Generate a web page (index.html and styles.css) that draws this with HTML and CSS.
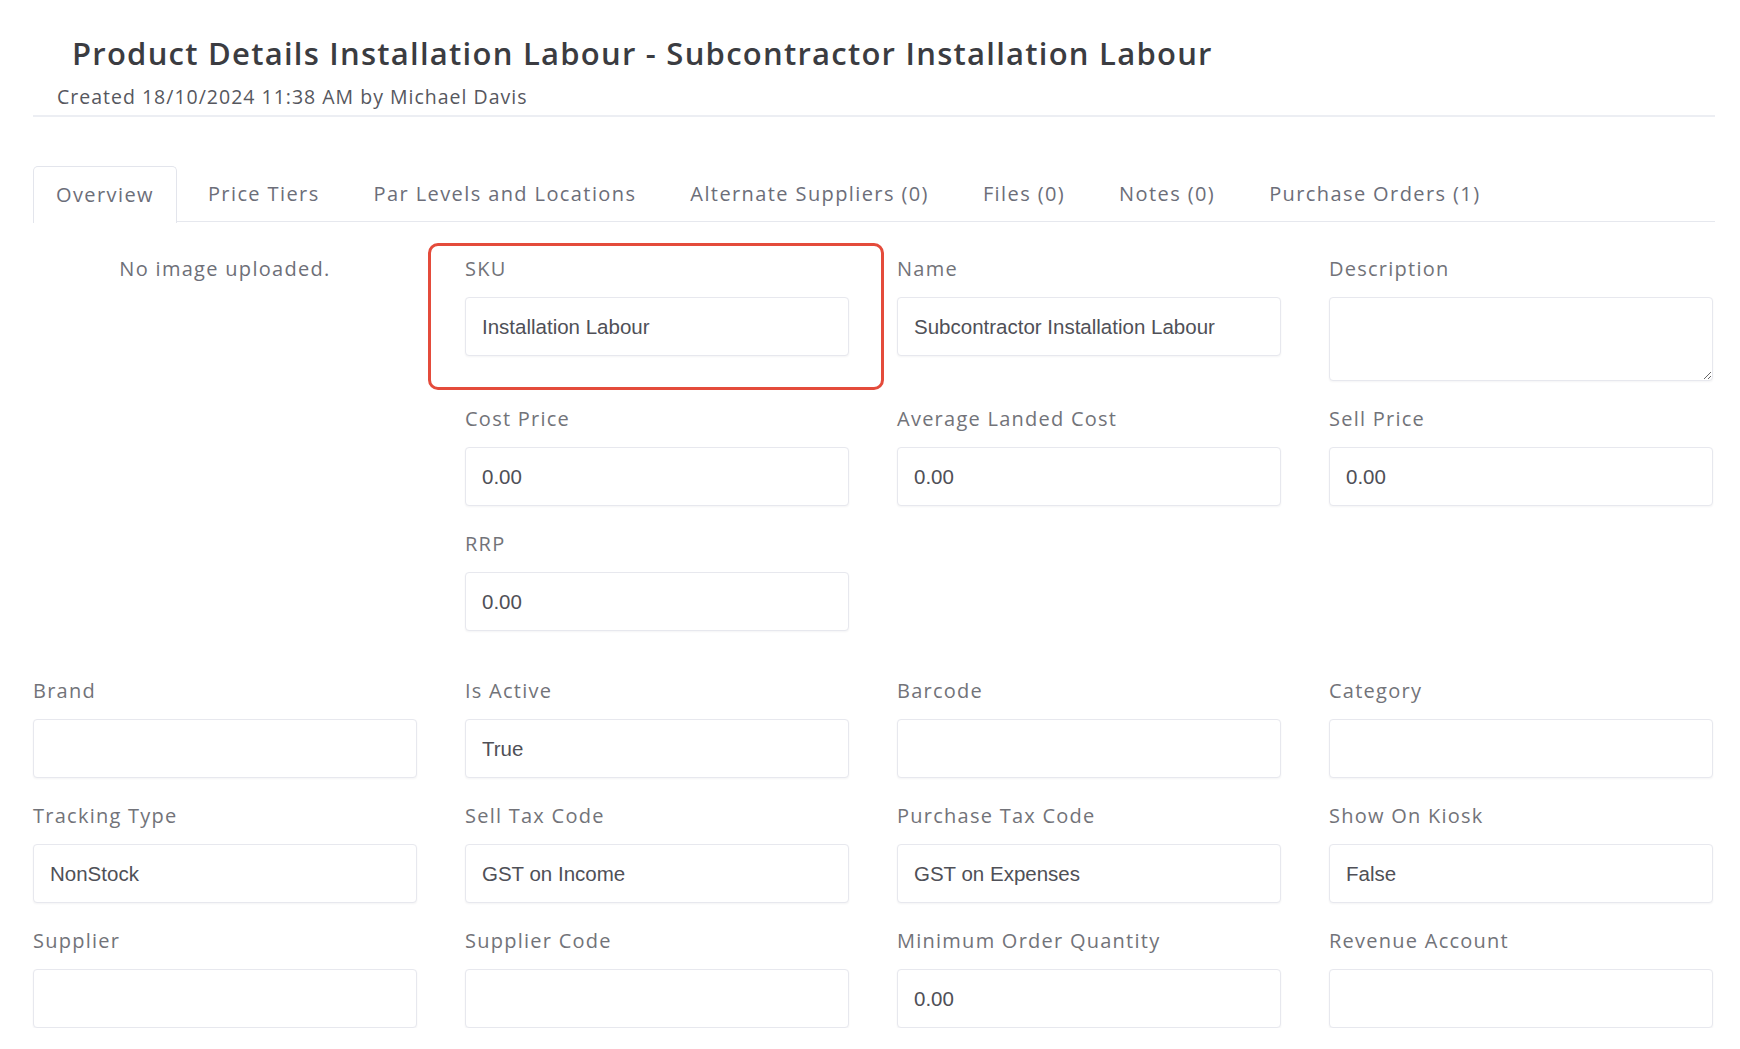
FILE: index.html
```html
<!DOCTYPE html>
<html lang="en">
<head>
<meta charset="utf-8">
<title>Product Details</title>
<link rel="stylesheet" href="styles.css">
</head>
<body>
<div class="page">
  <header class="page-header">
    <h1 class="page-title">Product Details Installation Labour - Subcontractor Installation Labour</h1>
    <div class="page-subtitle">Created 18/10/2024 11:38 AM by Michael Davis</div>
  </header>

  <nav class="tabs">
    <a class="tab active">Overview</a>
    <a class="tab">Price Tiers</a>
    <a class="tab">Par Levels and Locations</a>
    <a class="tab">Alternate Suppliers (0)</a>
    <a class="tab">Files (0)</a>
    <a class="tab">Notes (0)</a>
    <a class="tab">Purchase Orders (1)</a>
  </nav>

  <section class="overview">
    <div class="top-grid">
      <div class="image-col">No image uploaded.</div>
      <div class="top-fields">
        <div class="field highlighted">
          <span class="highlight-box"></span>
          <label class="field-label">SKU</label>
          <input class="field-input" type="text" value="Installation Labour" readonly>
        </div>
        <div class="field">
          <label class="field-label">Name</label>
          <input class="field-input" type="text" value="Subcontractor Installation Labour" readonly>
        </div>
        <div class="field">
          <label class="field-label">Description</label>
          <textarea class="field-input field-textarea" readonly></textarea>
        </div>
        <div class="field">
          <label class="field-label">Cost Price</label>
          <input class="field-input" type="text" value="0.00" readonly>
        </div>
        <div class="field">
          <label class="field-label">Average Landed Cost</label>
          <input class="field-input" type="text" value="0.00" readonly>
        </div>
        <div class="field">
          <label class="field-label">Sell Price</label>
          <input class="field-input" type="text" value="0.00" readonly>
        </div>
        <div class="field">
          <label class="field-label">RRP</label>
          <input class="field-input" type="text" value="0.00" readonly>
        </div>
      </div>
    </div>

    <div class="bottom-grid">
      <div class="field">
        <label class="field-label">Brand</label>
        <input class="field-input" type="text" value="" readonly>
      </div>
      <div class="field">
        <label class="field-label">Is Active</label>
        <input class="field-input" type="text" value="True" readonly>
      </div>
      <div class="field">
        <label class="field-label">Barcode</label>
        <input class="field-input" type="text" value="" readonly>
      </div>
      <div class="field">
        <label class="field-label">Category</label>
        <input class="field-input" type="text" value="" readonly>
      </div>
      <div class="field">
        <label class="field-label">Tracking Type</label>
        <input class="field-input" type="text" value="NonStock" readonly>
      </div>
      <div class="field">
        <label class="field-label">Sell Tax Code</label>
        <input class="field-input" type="text" value="GST on Income" readonly>
      </div>
      <div class="field">
        <label class="field-label">Purchase Tax Code</label>
        <input class="field-input" type="text" value="GST on Expenses" readonly>
      </div>
      <div class="field">
        <label class="field-label">Show On Kiosk</label>
        <input class="field-input" type="text" value="False" readonly>
      </div>
      <div class="field">
        <label class="field-label">Supplier</label>
        <input class="field-input" type="text" value="" readonly>
      </div>
      <div class="field">
        <label class="field-label">Supplier Code</label>
        <input class="field-input" type="text" value="" readonly>
      </div>
      <div class="field">
        <label class="field-label">Minimum Order Quantity</label>
        <input class="field-input" type="text" value="0.00" readonly>
      </div>
      <div class="field">
        <label class="field-label">Revenue Account</label>
        <input class="field-input" type="text" value="" readonly>
      </div>
    </div>
  </section>
</div>
</body>
</html>
```

FILE: styles.css
```css
* {
  box-sizing: border-box;
}

html, body {
  margin: 0;
  padding: 0;
  background: #ffffff;
}

body {
  font-family: "Open Sans", "Noto Sans", sans-serif;
  color: #6e6f78;
  overflow: hidden;
}

.page {
  width: 1715px;
  padding-left: 33px;
}

.page-header {
  height: 117px;
  border-bottom: 2px solid #eceef3;
  padding-top: 33px;
}

.page-title {
  margin: 0 0 0 39px;
  font-size: 31px;
  font-weight: 600;
  line-height: 40px;
  color: #3b3c41;
  letter-spacing: 1.25px;
  white-space: nowrap;
}

.page-subtitle {
  margin: 11px 0 0 24px;
  font-size: 19.5px;
  line-height: 26px;
  color: #56575e;
  font-weight: 400;
  letter-spacing: 1px;
}

.tabs {
  display: flex;
  gap: 8px;
  margin-top: 49px;
  height: 56px;
  border-bottom: 1px solid #e6e8ee;
}

.tab {
  display: flex;
  align-items: center;
  padding: 0 22px 2px;
  font-size: 20px;
  letter-spacing: 1.4px;
  color: #6c6e79;
  border: 1px solid transparent;
  border-bottom: none;
  border-radius: 5px 5px 0 0;
  cursor: pointer;
  white-space: nowrap;
}

.tab.active {
  border-color: #e3e5ec;
  background: #ffffff;
  height: 57px;
}

.overview {
  padding-top: 35px;
}

.top-grid {
  display: grid;
  grid-template-columns: 384px 1fr;
  column-gap: 48px;
}

.image-col {
  text-align: center;
  font-size: 20px;
  letter-spacing: 1.3px;
  line-height: 24px;
  color: #6e6f78;
}

.top-fields {
  display: grid;
  grid-template-columns: repeat(3, 384px);
  column-gap: 48px;
  row-gap: 26px;
  align-items: start;
}

.bottom-grid {
  margin-top: 48px;
  display: grid;
  grid-template-columns: repeat(4, 384px);
  column-gap: 48px;
  row-gap: 26px;
}

.field {
  display: flex;
  flex-direction: column;
}

.field.highlighted {
  position: relative;
}

.highlight-box {
  position: absolute;
  left: -37px;
  top: -14px;
  width: 456px;
  height: 147px;
  border: 3px solid #e44b3b;
  border-radius: 10px;
  pointer-events: none;
}

.field-label {
  display: block;
  font-size: 20px;
  letter-spacing: 1.25px;
  line-height: 24px;
  margin-bottom: 16px;
  color: #727379;
  font-weight: 400;
  white-space: nowrap;
}

.field-input {
  display: block;
  width: 100%;
  height: 59px;
  padding: 0 16px;
  border: 1px solid #e7e8ee;
  border-radius: 4px;
  background: #ffffff;
  box-shadow: 0 1px 2px rgba(30, 35, 60, 0.05);
  font-family: "Liberation Sans", Arial, sans-serif;
  font-size: 20.5px;
  color: #4f5057;
  outline: none;
}

.field-textarea {
  height: 84px;
  resize: both;
  padding: 12px 16px;
}
```
